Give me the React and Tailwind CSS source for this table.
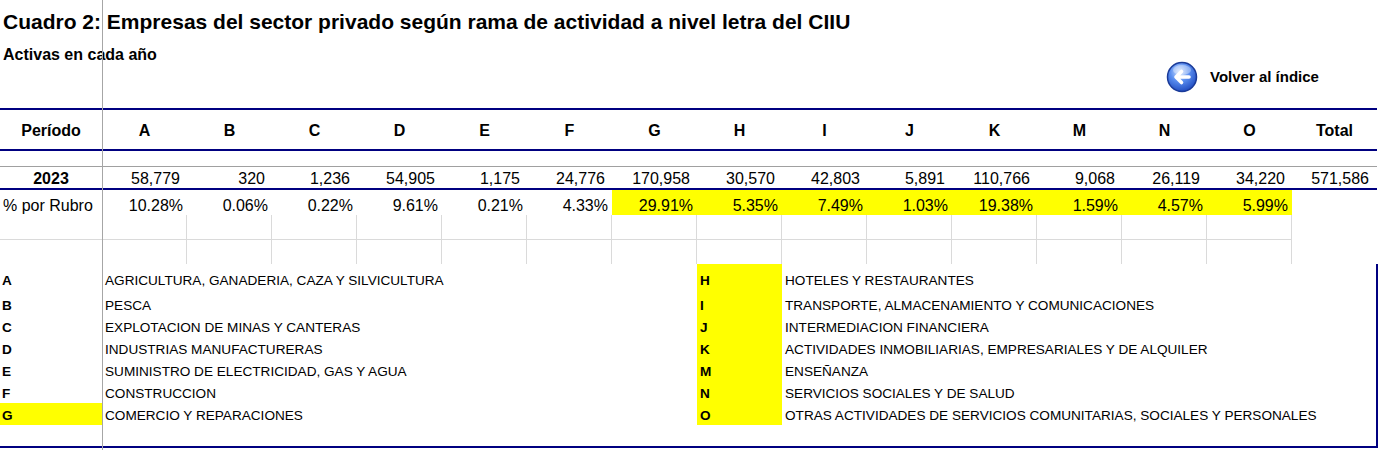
import React from "react";

const cols = ["A", "B", "C", "D", "E", "F", "G", "H", "I", "J", "K", "M", "N", "O"];

const values = ["58,779", "320", "1,236", "54,905", "1,175", "24,776", "170,958", "30,570", "42,803", "5,891", "110,766", "9,068", "26,119", "34,220"];

const shares = ["10.28%", "0.06%", "0.22%", "9.61%", "0.21%", "4.33%", "29.91%", "5.35%", "7.49%", "1.03%", "19.38%", "1.59%", "4.57%", "5.99%"];

const left = [
  ["A", "AGRICULTURA, GANADERIA, CAZA Y SILVICULTURA"],
  ["B", "PESCA"],
  ["C", "EXPLOTACION DE MINAS Y CANTERAS"],
  ["D", "INDUSTRIAS MANUFACTURERAS"],
  ["E", "SUMINISTRO DE ELECTRICIDAD, GAS Y AGUA"],
  ["F", "CONSTRUCCION"],
  ["G", "COMERCIO Y REPARACIONES"],
];

const right = [
  ["H", "HOTELES Y RESTAURANTES"],
  ["I", "TRANSPORTE, ALMACENAMIENTO Y COMUNICACIONES"],
  ["J", "INTERMEDIACION FINANCIERA"],
  ["K", "ACTIVIDADES INMOBILIARIAS, EMPRESARIALES Y DE ALQUILER"],
  ["M", "ENSEÑANZA"],
  ["N", "SERVICIOS SOCIALES Y DE SALUD"],
  ["O", "OTRAS ACTIVIDADES DE SERVICIOS COMUNITARIAS, SOCIALES Y PERSONALES"],
];

function BackIcon() {
  return (
    <svg width="32" height="32" viewBox="0 0 32 32">
      <defs>
        <radialGradient id="bk" cx="42%" cy="32%" r="72%">
          <stop offset="0" stopColor="#d6e6ff" />
          <stop offset="0.45" stopColor="#5b8ff0" />
          <stop offset="1" stopColor="#1c47bd" />
        </radialGradient>
      </defs>
      <circle cx="16" cy="16" r="14.5" fill="url(#bk)" stroke="#1a3a98" strokeWidth="1.5" />
      <ellipse cx="16" cy="9" rx="9" ry="5" fill="#ffffff" opacity="0.35" />
      <path d="M23 16H10.5M15.5 10.5L10 16l5.5 5.5" fill="none" stroke="#ffffff" strokeWidth="3.6" strokeLinecap="round" strokeLinejoin="round" />
    </svg>
  );
}

export default function App() {
  const grid = "grid grid-cols-[102px_repeat(15,85px)]";

  return (
    <div className="relative h-[450px] w-[1383px] overflow-hidden bg-white text-black font-['Liberation_Sans',Arial,sans-serif]">
      {/* frozen pane divider */}
      <div className="pointer-events-none absolute inset-y-0 left-[102px] z-10 w-px bg-[#a6a6a6]" />

      <div className="flex h-[40px] items-center pl-[3px] pt-[2px] text-[21px] font-bold leading-none">
        Cuadro 2: Empresas del sector privado según rama de actividad a nivel letra del CIIU
      </div>

      <div className="flex h-[68px]">
        <div className="w-[1166px] pl-[3px] pt-[6px] text-[16px] font-bold leading-[18px]">
          Activas en cada año
        </div>
        <div className="mt-[21px] flex h-[32px] items-center gap-[12px]">
          <BackIcon />
          <span className="text-[15px] font-bold">Volver al índice</span>
        </div>
      </div>

      <div className="w-[1377px]">
        <div className="h-[2px] bg-[#000080]" />
        <div className={`${grid} h-[39px] items-center pt-[3px] text-center text-[16px] font-bold`}>
          <div>Período</div>
          {cols.map((c) => (
            <div key={c}>{c}</div>
          ))}
          <div>Total</div>
        </div>
        <div className="h-[2px] bg-[#000080]" />
        <div className="h-[16px] border-b border-[#a0a0a0]" />

        <div className={`${grid} h-[21px] items-center pt-[3px] text-[16px] leading-none`}>
          <div className="text-center font-bold">2023</div>
          {values.map((v, i) => (
            <div key={i} className="pr-[7px] text-right">
              {v}
            </div>
          ))}
          <div className="pr-[8px] text-right">571,586</div>
        </div>
        <div className="h-[2px] bg-[#000080]" />

        <div className={`${grid} h-[25px] text-[16px] leading-none`}>
          <div className="pl-[3px] pt-[8px]">% por Rubro</div>
          {shares.map((s, i) => (
            <div key={i} className={`pr-[4px] pt-[8px] text-right ${i >= 6 ? "bg-[#ffff00]" : ""}`}>
              {s}
            </div>
          ))}
          <div />
        </div>

        <div className={`${grid} h-[25px]`}>
          <div className="border-b border-[#dadada]" />
          {cols.map((c) => (
            <div key={c} className="border-b border-r border-[#dadada]" />
          ))}
          <div />
        </div>
        <div className={`${grid} h-[24px]`}>
          <div />
          {cols.map((c) => (
            <div key={c} className="border-r border-[#dadada]" />
          ))}
          <div />
        </div>
      </div>

      <div className="h-[184px] w-[1378px] border-b-2 border-r-2 border-[#000080]">
        <div className="grid grid-cols-[102px_595px_85px_595px] text-[13.6px] leading-none">
          {left.map(([lk, ld], i) => {
            const [rk, rd] = right[i];
            const h = i === 0 ? "h-[29px] items-end pb-[5px]" : "h-[22px] items-center pt-[3px]";
            return (
              <React.Fragment key={lk}>
                <div className={`${h} flex pl-[2px] font-bold ${lk === "G" ? "bg-[#ffff00]" : ""}`}>{lk}</div>
                <div className={`${h} flex pl-[3px]`}>{ld}</div>
                <div className={`${h} flex bg-[#ffff00] pl-[3px] font-bold`}>{rk}</div>
                <div className={`${h} flex pl-[3px]`}>{rd}</div>
              </React.Fragment>
            );
          })}
        </div>
      </div>
    </div>
  );
}
